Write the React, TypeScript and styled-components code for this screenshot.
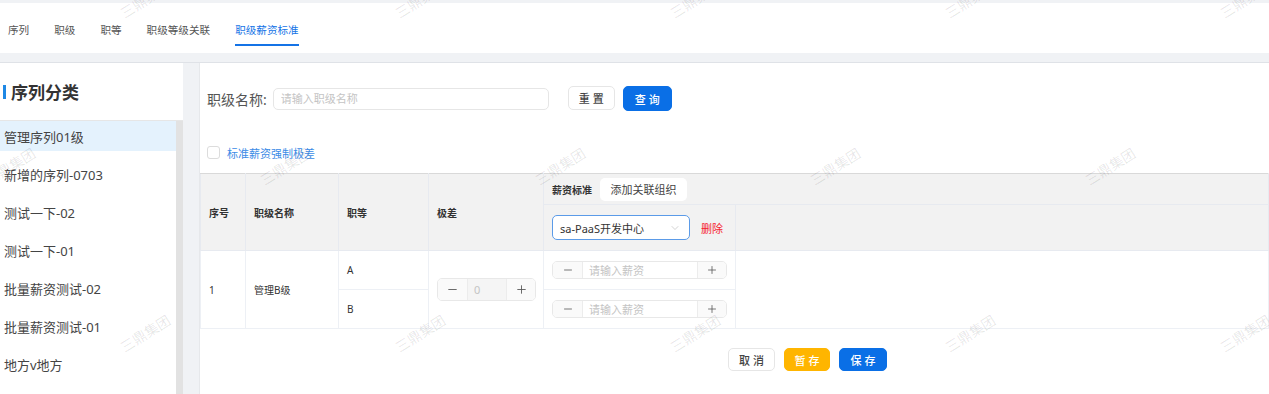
import React from "react";
import styled, { createGlobalStyle, css } from "styled-components";
import { ChevronDown, Minus, Plus } from "lucide-react";

const GlobalStyle = createGlobalStyle`
  html, body { margin: 0; padding: 0; }
  body {
    font-family: "Noto Sans", "Noto Sans CJK SC", sans-serif;
    background: #f0f2f5;
    overflow: hidden;
  }
  * { box-sizing: border-box; }
`;

const Page = styled.div`
  position: relative;
  width: 1269px;
  height: 394px;
  overflow: hidden;
  background: #f0f2f5;
  display: flex;
  flex-direction: column;
  padding-top: 3px;
`;

const TabBar = styled.nav`
  height: 50px;
  flex-shrink: 0;
  background: #fff;
  display: flex;
  gap: 25px;
  padding-left: 8px;
`;

const Tab = styled.div<{ $active?: boolean }>`
  position: relative;
  display: flex;
  align-items: center;
  padding-top: 2px;
  font-size: 10.6px;
  color: ${(p) => (p.$active ? "#1473e6" : "#555")};
  ${(p) =>
    p.$active &&
    css`
      &::after {
        content: "";
        position: absolute;
        left: 0;
        right: 0;
        bottom: 7px;
        height: 2px;
        background: #1473e6;
      }
    `}
`;

const Band = styled.div`
  height: 10px;
  flex-shrink: 0;
  background: #f0f2f5;
  border-bottom: 1px solid #dfe2e7;
`;

const Main = styled.div`
  flex: 1;
  min-height: 0;
  display: flex;
  gap: 16px;
`;

const LeftPanel = styled.aside`
  width: 183px;
  background: #fff;
  display: flex;
  flex-direction: column;
`;

const TitleArea = styled.div`
  height: 58px;
  flex-shrink: 0;
  display: flex;
  align-items: center;
  gap: 5px;
  padding-left: 3px;
  border-bottom: 1px solid #e6e6e6;
`;

const TitleBar = styled.span`
  width: 3px;
  height: 14px;
  background: #1e88e5;
`;

const TitleText = styled.h2`
  margin: 0;
  font-size: 17px;
  font-weight: 700;
  color: #333;
`;

const ListArea = styled.div`
  flex: 1;
  display: flex;
  min-height: 0;
`;

const List = styled.ul`
  flex: 1;
  margin: 0;
  padding: 0;
  list-style: none;
  display: flex;
  flex-direction: column;
  gap: 8px;
`;

const ListItem = styled.li<{ $selected?: boolean }>`
  height: 30px;
  flex-shrink: 0;
  display: flex;
  align-items: center;
  padding-left: 4px;
  font-size: 13px;
  color: #444;
  background: ${(p) => (p.$selected ? "#e4f2fd" : "transparent")};
`;

const ScrollTrack = styled.div`
  width: 7px;
  background: #e2e2e2;
`;

const RightPanel = styled.section`
  flex: 1;
  background: #fff;
  border-left: 1px solid #e6e8eb;
  display: flex;
  flex-direction: column;
  padding-top: 23px;
`;

const SearchRow = styled.div`
  height: 25px;
  display: flex;
  align-items: center;
  padding-left: 7px;
`;

const Label = styled.label`
  font-size: 14px;
  color: #555;
  margin-right: 6px;
`;

const TextInput = styled.input`
  width: 276px;
  height: 22px;
  border: 1px solid #e6e6e6;
  border-radius: 5px;
  padding: 0 7px;
  font-family: inherit;
  font-size: 11px;
  outline: none;
  margin-right: 19px;
  &::placeholder { color: #c4c4c4; }
`;

const Button = styled.button<{ $kind?: "default" | "primary" | "warning" }>`
  height: 24px;
  padding: 0;
  border-radius: 5px;
  font-family: inherit;
  font-size: 11px;
  letter-spacing: 3px;
  text-indent: 3px;
  font-weight: 500;
  cursor: pointer;
  ${(p) =>
    p.$kind === "primary"
      ? css`
          background: #0a6fe6;
          border: 1px solid #0a6fe6;
          color: #fff;
        `
      : p.$kind === "warning"
      ? css`
          background: #ffb500;
          border: 1px solid #ffb500;
          color: #fff;
        `
      : css`
          background: #fff;
          border: 1px solid #e6e6e6;
          color: #444;
        `}
`;

const SearchButtons = styled.div`
  display: flex;
  gap: 8px;
`;

const CheckRow = styled.label`
  margin-top: 35px;
  height: 13px;
  display: flex;
  align-items: center;
  gap: 7px;
  padding-left: 7px;
  font-size: 11px;
  color: #3b8be6;
`;

const CheckBox = styled.span`
  width: 13px;
  height: 13px;
  border: 1px solid #dcdcdc;
  border-radius: 3px;
  background: #fff;
`;

const Table = styled.table`
  margin-top: 14px;
  width: 100%;
  table-layout: fixed;
  border-collapse: collapse;
  font-size: 10px;
  color: #333;
`;

const Th = styled.th<{ $h?: number }>`
  background: #f2f2f2;
  border: 1px solid #e7eaf0;
  border-top: 1px solid #d9d9d9;
  text-align: left;
  padding: 0 8px;
  font-weight: 700;
  height: ${(p) => p.$h ?? 31}px;
`;

const Td = styled.td`
  border: 1px solid #edf0f5;
  padding: 0 8px;
  height: 39px;
  font-weight: 400;
`;

const HeadGroup = styled.div`
  display: flex;
  align-items: center;
  gap: 8px;
`;

const GhostButton = styled.button`
  height: 23px;
  width: 87px;
  border: none;
  border-radius: 5px;
  background: #fff;
  font-family: inherit;
  font-size: 11px;
  color: #444;
  padding: 0;
`;

const SelectBox = styled.div`
  width: 138px;
  height: 25px;
  border: 1px solid #5b9be8;
  border-radius: 5px;
  background: #fff;
  display: flex;
  align-items: center;
  justify-content: space-between;
  padding: 0 8px 0 7px;
  font-size: 11px;
  font-weight: 400;
  color: #333;
`;

const DangerLink = styled.span`
  font-size: 11px;
  font-weight: 400;
  color: #f5222d;
  margin-left: 3px;
`;

const Stepper = styled.div<{ $w: number; $h: number }>`
  width: ${(p) => p.$w}px;
  height: ${(p) => p.$h}px;
  border: 1px solid #e8e8e8;
  border-radius: 5px;
  display: flex;
  overflow: hidden;
  background: #fff;
`;

const StepBtn = styled.span<{ $w: number }>`
  width: ${(p) => p.$w}px;
  display: flex;
  align-items: center;
  justify-content: center;
  color: #555;
  background: #fafafa;
`;

const StepValue = styled.span<{ $disabled?: boolean }>`
  flex: 1;
  display: flex;
  align-items: center;
  padding-left: 6px;
  font-size: 11px;
  color: #c4c4c4;
  border-left: 1px solid #ececec;
  border-right: 1px solid #ececec;
  background: ${(p) => (p.$disabled ? "#f5f5f5" : "#fff")};
`;

const Footer = styled.div`
  padding-top: 19px;
  padding-left: 528px;
  display: flex;
  gap: 9px;
`;

const WatermarkLayer = styled.div`
  position: absolute;
  inset: 0;
  pointer-events: none;
  overflow: hidden;
`;

const Mark = styled.span`
  position: absolute;
  transform: translate(-50%, -50%) rotate(-32deg);
  font-size: 14px;
  white-space: nowrap;
  color: rgba(0, 0, 0, 0.1);
  font-family: "Noto Sans CJK SC", sans-serif;
`;

const tabs = ["序列", "职级", "职等", "职级等级关联", "职级薪资标准"];
const items = [
  "管理序列01级",
  "新增的序列-0703",
  "测试一下-02",
  "测试一下-01",
  "批量薪资测试-02",
  "批量薪资测试-01",
  "地方v地方",
];

const marks: { x: number; y: number }[] = [];
for (let r = 0; r < 3; r++) {
  const off = r % 2 === 1 ? -20 : 115;
  for (let i = 0; i < 5; i++) {
    marks.push({ x: off + 275 * i + 30, y: -1 + 167 * r });
  }
}

const SalaryInput = () => (
  <Stepper $w={175} $h={18}>
    <StepBtn $w={29}>
      <Minus size={12} strokeWidth={1.6} />
    </StepBtn>
    <StepValue>请输入薪资</StepValue>
    <StepBtn $w={28}>
      <Plus size={12} strokeWidth={1.6} />
    </StepBtn>
  </Stepper>
);

export default function App() {
  return (
    <>
      <GlobalStyle />
      <Page>
        <TabBar>
          {tabs.map((t, i) => (
            <Tab key={t} $active={i === 4}>
              {t}
            </Tab>
          ))}
        </TabBar>
        <Band />
        <Main>
          <LeftPanel>
            <TitleArea>
              <TitleBar />
              <TitleText>序列分类</TitleText>
            </TitleArea>
            <ListArea>
              <List>
                {items.map((t, i) => (
                  <ListItem key={t} $selected={i === 0}>
                    {t}
                  </ListItem>
                ))}
              </List>
              <ScrollTrack />
            </ListArea>
          </LeftPanel>
          <RightPanel>
            <SearchRow>
              <Label>职级名称:</Label>
              <TextInput placeholder="请输入职级名称" />
              <SearchButtons>
                <Button style={{ width: 47 }}>重置</Button>
                <Button $kind="primary" style={{ width: 49, height: 25 }}>
                  查询
                </Button>
              </SearchButtons>
            </SearchRow>
            <CheckRow>
              <CheckBox />
              标准薪资强制极差
            </CheckRow>
            <Table>
              <colgroup>
                <col style={{ width: 45 }} />
                <col style={{ width: 93 }} />
                <col style={{ width: 90 }} />
                <col style={{ width: 115 }} />
                <col style={{ width: 192 }} />
                <col />
              </colgroup>
              <thead>
                <tr>
                  <Th rowSpan={2}>序号</Th>
                  <Th rowSpan={2}>职级名称</Th>
                  <Th rowSpan={2}>职等</Th>
                  <Th rowSpan={2}>极差</Th>
                  <Th colSpan={2} $h={31}>
                    <HeadGroup>
                      薪资标准
                      <GhostButton>添加关联组织</GhostButton>
                    </HeadGroup>
                  </Th>
                </tr>
                <tr>
                  <Th $h={46} style={{ borderTopColor: "#e7eaf0" }}>
                    <HeadGroup>
                      <SelectBox>
                        sa-PaaS开发中心
                        <ChevronDown size={12} strokeWidth={1.2} color="#b5b5b5" />
                      </SelectBox>
                      <DangerLink>删除</DangerLink>
                    </HeadGroup>
                  </Th>
                  <Th $h={46} style={{ borderTopColor: "#e7eaf0" }} />
                </tr>
              </thead>
              <tbody>
                <tr>
                  <Td rowSpan={2}>1</Td>
                  <Td rowSpan={2}>管理B级</Td>
                  <Td>A</Td>
                  <Td rowSpan={2}>
                    <Stepper $w={99} $h={23}>
                      <StepBtn $w={29}>
                        <Minus size={13} strokeWidth={1.6} />
                      </StepBtn>
                      <StepValue $disabled>0</StepValue>
                      <StepBtn $w={28}>
                        <Plus size={13} strokeWidth={1.6} />
                      </StepBtn>
                    </Stepper>
                  </Td>
                  <Td>
                    <SalaryInput />
                  </Td>
                  <Td rowSpan={2} />
                </tr>
                <tr>
                  <Td>B</Td>
                  <Td>
                    <SalaryInput />
                  </Td>
                </tr>
              </tbody>
            </Table>
            <Footer>
              <Button style={{ width: 47, height: 23 }}>取消</Button>
              <Button $kind="warning" style={{ width: 46, height: 23 }}>
                暂存
              </Button>
              <Button $kind="primary" style={{ width: 48, height: 23 }}>
                保存
              </Button>
            </Footer>
          </RightPanel>
        </Main>
        <WatermarkLayer>
          {marks.map((m, i) => (
            <Mark key={i} style={{ left: m.x, top: m.y }}>
              三鼎集团
            </Mark>
          ))}
        </WatermarkLayer>
      </Page>
    </>
  );
}
